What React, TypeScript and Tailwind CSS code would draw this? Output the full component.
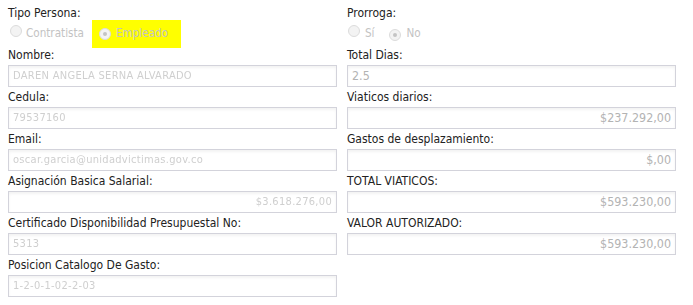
import React from 'react';

const Radio = ({ checked }: { checked?: boolean }) => (
  <span className="inline-flex w-[12px] h-[12px] rounded-full border border-[#dcdcdc] bg-[#f3f3f3] items-center justify-center">
    {checked && <span className="w-[4px] h-[4px] rounded-full bg-[#c4c4c4]"></span>}
  </span>
);

const Label = ({ children }: { children: React.ReactNode }) => (
  <div className="h-[20px] leading-[20px] text-[12px] text-[#222] whitespace-nowrap">{children}</div>
);

const Field = ({
  value,
  right,
  hidden,
}: {
  value: string;
  right?: boolean;
  hidden?: boolean;
}) => (
  <div
    className={`h-[22px] border border-[#d3d3db] bg-white shadow-[inset_0_2px_3px_rgba(0,0,0,0.05)] flex items-center px-[4px] ${right ? 'justify-end' : ''}`}
  >
    <span
      className={
        hidden
          ? 'text-[11px] text-[#cfcfcf] blur-[0.7px] tracking-[0.3px]'
          : 'text-[12.4px] text-[#b3b3b3]'
      }
    >
      {value}
    </span>
  </div>
);

export default function App() {
  return (
    <div className="w-[693px] h-[305px] bg-white pt-[3px] pl-[8px] font-['DejaVu_Sans_Condensed','DejaVu_Sans',sans-serif]">
      <div className="grid grid-cols-[329px_329px] gap-x-[10px]">
        {/* Left column */}
        <div>
          <Label>Tipo Persona:</Label>
          <div className="h-[22px] flex items-center text-[11.6px] text-[#c3c3c3]">
            <span className="ml-[2px]"><Radio /></span>
            <span className="ml-[4px]">Contratista</span>
            <span className="ml-[8px] h-[28px] bg-[#ffff00] flex items-center pl-[7px] pr-[13px]">
              <Radio checked />
              <span className="ml-[5px]">Empleado</span>
            </span>
          </div>
          <Label>Nombre:</Label>
          <Field value="DAREN ANGELA SERNA ALVARADO" hidden />
          <Label>Cedula:</Label>
          <Field value="79537160" hidden />
          <Label>Email:</Label>
          <Field value="oscar.garcia@unidadvictimas.gov.co" hidden />
          <Label>Asignación Basica Salarial:</Label>
          <Field value="$3.618.276,00" hidden right />
          <Label>Certificado Disponibilidad Presupuestal No:</Label>
          <Field value="5313" hidden />
          <Label>Posicion Catalogo De Gasto:</Label>
          <Field value="1-2-0-1-02-2-03" hidden />
        </div>

        {/* Right column */}
        <div>
          <Label>Prorroga:</Label>
          <div className="h-[22px] flex items-center text-[11.6px] text-[#c3c3c3]">
            <span className="ml-[1px]"><Radio /></span>
            <span className="ml-[5px]">Sí</span>
            <span className="ml-[14px]"><Radio checked /></span>
            <span className="ml-[6px]">No</span>
          </div>
          <Label>Total Dias:</Label>
          <Field value="2.5" />
          <Label>Viaticos diarios:</Label>
          <Field value="$237.292,00" right />
          <Label>Gastos de desplazamiento:</Label>
          <Field value="$,00" right />
          <Label>TOTAL VIATICOS:</Label>
          <Field value="$593.230,00" right />
          <Label>VALOR AUTORIZADO:</Label>
          <Field value="$593.230,00" right />
        </div>
      </div>
    </div>
  );
}
